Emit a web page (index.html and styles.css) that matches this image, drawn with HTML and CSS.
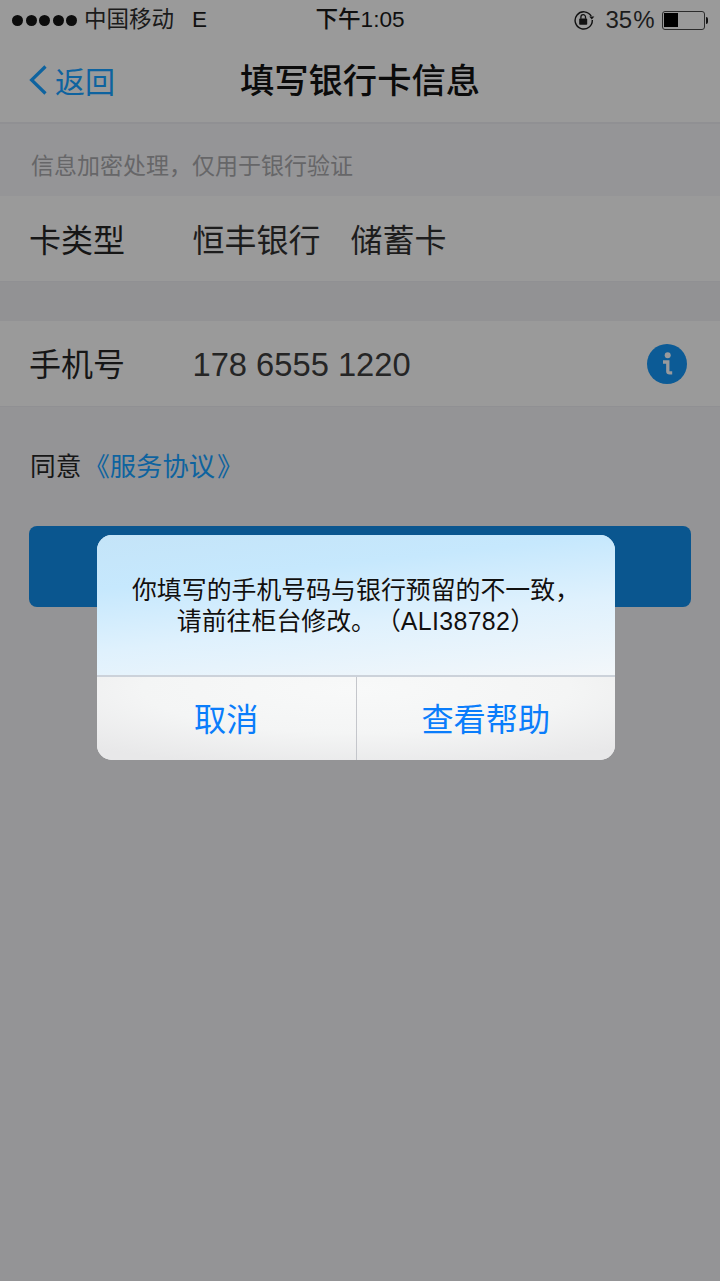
FILE: index.html
```html
<!DOCTYPE html>
<html lang="zh-CN">
<head>
<meta charset="utf-8">
<title>填写银行卡信息</title>
<link rel="stylesheet" href="styles.css">
</head>
<body>
<div class="screen">
  <header class="top">
    <div class="status">
      <div class="status-left">
        <div class="dots"><i></i><i></i><i></i><i></i><i></i></div>
        <span class="carrier">中国移动</span>
        <span class="net">E</span>
      </div>
      <div class="clock">下午1:05</div>
      <div class="status-right">
        <svg class="lock" width="22" height="20" viewBox="0 0 22 20"><path d="M18.2 6.2A8.6 8.6 0 1 0 19.3 10" fill="none" stroke="#111" stroke-width="1.4"/><path d="M16.3 6.6h5l-2.5 3z" fill="#111"/><rect x="6.2" y="8.6" width="8" height="6.2" rx="0.8" fill="#111"/><path d="M7.9 8.8V7a2.3 2.3 0 0 1 4.6 0v1.8" fill="none" stroke="#111" stroke-width="1.3"/></svg>
        <span class="pct">35<span class="pct-sign">%</span></span>
        <div class="battery"><div class="battery-fill"></div></div>
        <div class="battery-tip"></div>
      </div>
    </div>
    <nav class="nav">
      <div class="back">
        <svg width="20" height="32" viewBox="0 0 20 32"><path d="M17.5 2.5 3.6 16l13.9 13.5" fill="none" stroke="#0e639f" stroke-width="3.2"/></svg>
        <span>返回</span>
      </div>
      <h1 class="title">填写银行卡信息</h1>
    </nav>
  </header>
  <p class="hint">信息加密处理，仅用于银行验证</p>
  <section class="row">
    <span class="label label-card">卡类型</span>
    <span class="value value-card">恒丰银行<span class="card-kind">储蓄卡</span></span>
  </section>
  <div class="gap"></div>
  <section class="row">
    <span class="label">手机号</span>
    <span class="value phone">178 6555 1220</span>
    <svg class="info" width="40" height="40" viewBox="0 0 40 40"><circle cx="20" cy="20" r="20" fill="#0c5b96"/><circle cx="20.7" cy="11.2" r="3" fill="#9a9a9c"/><path d="M16 18h4.8v9.2q0 1.6 1.8 1.6h2.6" fill="none" stroke="#9a9a9c" stroke-width="3.3"/></svg>
  </section>
  <p class="agree">同意 <span class="link">《服务协议<span class="close-quote">》</span></span></p>
  <div class="primary"></div>

  <div class="dialog">
    <div class="message">你填写的手机号码与银行预留的不一致，<br>请前往柜台修改。（<span class="code">ALI38782</span>）</div>
    <div class="actions">
      <div class="action">取消</div>
      <div class="action action-right">查看帮助</div>
    </div>
  </div>
</div>
</body>
</html>
```

FILE: styles.css
```css
* { box-sizing: border-box; }
html, body { margin: 0; padding: 0; }
body { font-family: "Liberation Sans", "Noto Sans CJK SC", sans-serif; text-spacing-trim: space-all; }
.screen {
  position: relative;
  width: 720px;
  height: 1281px;
  overflow: hidden;
  background: #949496;
  color: #161616;
}
.top {
  height: 124px;
  background: #9a9a9a;
  border-bottom: 2px solid #909093;
}
.status {
  position: relative;
  height: 40px;
  display: flex;
  align-items: center;
  justify-content: space-between;
  padding: 0 12px;
}
.status-left { display: flex; align-items: center; }
.dots { display: flex; gap: 2.5px; width: 72px; }
.dots i { width: 11px; height: 11px; border-radius: 50%; background: #0c0c0c; }
.carrier { font-size: 22.5px; line-height: 42px; color: #1b1b1b; }
.net { font-size: 22.5px; line-height: 42px; margin-left: 18px; color: #111; }
.clock {
  position: absolute;
  left: 0;
  right: 0;
  text-align: center;
  font-size: 22.6px;
  font-weight: 500;
  color: #0f0f0f;
  line-height: 42px;
}
.status-right { display: flex; align-items: center; height: 40px; }
.lock { margin-right: 10px; }
.pct { font-size: 24px; color: #1c1c1c; margin-right: 7px; line-height: 42px; }
.pct-sign { margin-left: 1px; }
.battery {
  width: 43px;
  height: 19px;
  border: 1.5px solid #2b2b2b;
  border-radius: 3px;
  padding: 1.5px;
}
.battery-fill { width: 14px; height: 100%; background: #000; }
.battery-tip { width: 2.5px; height: 7px; background: #111; border-radius: 0 3px 3px 0; margin-left: 1px; }
.nav {
  position: relative;
  height: 82px;
  display: flex;
  align-items: center;
  justify-content: center;
}
.back {
  position: absolute;
  left: 28px;
  top: 0;
  height: 80px;
  display: flex;
  align-items: center;
  gap: 7px;
  color: #0e639f;
  font-size: 30px;
}
.title { margin: 0; font-size: 34.3px; font-weight: 500; color: #0b0b0b; line-height: 80px; }
.hint {
  margin: 0;
  height: 72px;
  padding-left: 31px;
  font-size: 23px;
  line-height: 84px;
  color: #666668;
  background: #959597;
}
.row {
  height: 86px;
  display: flex;
  align-items: center;
  padding: 0 33px 0 29px;
  background: #9a9a9a;
  border-bottom: 1px solid #909093;
}
.label { width: 163.5px; font-size: 32px; line-height: 42px; padding-top: 2px; color: #161616; }
.label-card { padding-top: 4px; }
.value { font-size: 32px; line-height: 38px; color: #1d1d1d; flex: 1; }
.value-card { padding-top: 4px; line-height: 42px; }
.card-kind { margin-left: 30px; }
.phone { font-size: 32.7px; color: #252525; line-height: 40px; padding-top: 3px; }
.info { flex: none; }
.gap { height: 39px; background: #929294; }
.agree { margin: 45px 0 0 30px; height: 30px; font-size: 25.7px; line-height: 30px; color: #161616; }
.link { color: #0e639f; margin-left: -5px; font-size: 26.3px; }
.close-quote { margin-left: 2px; }
.primary {
  margin: 44px 29px 0;
  height: 81px;
  background: #0a568f;
  border-radius: 8px;
}
.dialog {
  position: absolute;
  left: 97px;
  top: 535px;
  width: 518px;
  height: 225px;
  border-radius: 15px;
  overflow: hidden;
  display: flex;
  flex-direction: column;
  background: #f0f1f2;
}
.message {
  height: 142px;
  padding-top: 40px;
  text-align: center;
  font-size: 24.9px;
  line-height: 31px;
  color: #101010;
  text-shadow: 0 0 1px rgba(255, 255, 255, 0.7);
  background: linear-gradient(174deg, #c4e4f8 0%, #c6e8fd 28%, #dff1fd 60%, #f3f7fa 100%);
  border-bottom: 2px solid #ccd2da;
}
.code { letter-spacing: 0.35px; }
.actions {
  flex: 1;
  display: flex;
  background: radial-gradient(ellipse 75% 95% at 50% 15%, #f8f9f9 0%, #f4f5f5 55%, #e8e8e9 100%);
}
.action {
  flex: 1;
  display: flex;
  align-items: center;
  justify-content: center;
  font-size: 32.2px;
  color: #0a7dfb;
  padding-bottom: 3px;
}
.action-right { border-left: 1.5px solid #c4c6cb; }
```
